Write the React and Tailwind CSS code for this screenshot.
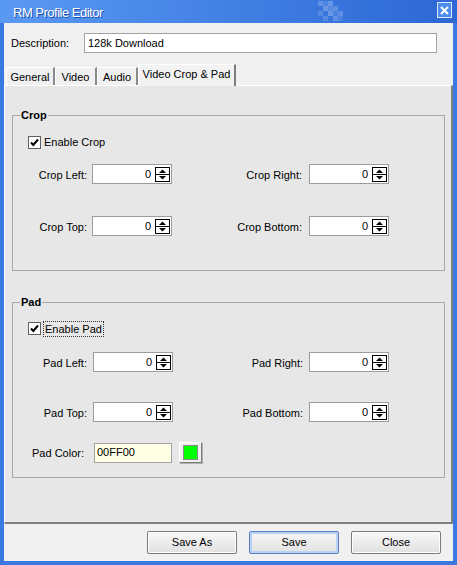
import React from "react";

function Spin() {
  return (
    <div className="flex items-center h-[20px] w-[80px] bg-white border border-[#9c9c9c]">
      <span className="flex-1 text-right pr-[4px] leading-[13px]">0</span>
      <svg width="15" height="15" viewBox="0 0 15 15" className="mr-[1px] shrink-0">
        <rect x="0.5" y="0.5" width="14" height="14" fill="#fff" stroke="#000" />
        <line x1="1" y1="7.5" x2="14" y2="7.5" stroke="#000" />
        <path d="M7.5 2.5 L11 6 L4 6 Z" fill="#000" />
        <path d="M4 9 L11 9 L7.5 12.5 Z" fill="#000" />
      </svg>
    </div>
  );
}

function Check({ label, focus }) {
  return (
    <div className="flex items-center h-[13px] ml-[15px]">
      <div className="w-[13px] h-[13px] bg-white border border-[#5f5f5f] flex items-center justify-center shrink-0">
        <svg width="11" height="11" viewBox="0 0 11 11">
          <path d="M2 5.5 L4.3 8 L9 2.5" fill="none" stroke="#000" strokeWidth="2" />
        </svg>
      </div>
      {focus ? (
        <span className="ml-[2px] px-[1px] leading-[14px] border border-dotted border-[#333]">{label}</span>
      ) : (
        <span className="ml-[3px] leading-[13px]">{label}</span>
      )}
    </div>
  );
}

function Row({ a, b, mt, g1, g2 }) {
  return (
    <div className={`flex items-center ${mt}`}>
      <div className="w-[74px] text-right leading-[13px] pt-[2px]">{a}</div>
      <div className={g1}>
        <Spin />
      </div>
      <div className="w-[130px] text-right leading-[13px] pt-[2px]">{b}</div>
      <div className={g2}>
        <Spin />
      </div>
    </div>
  );
}

const checker = [
  ["bg-white/20", "bg-white/10", "bg-white/25", "", ""],
  ["", "bg-white/25", "bg-white/15", "bg-white/20", ""],
  ["bg-white/15", "", "bg-white/25", "bg-white/10", "bg-white/20"],
  ["", "bg-white/15", "", "bg-white/20", "bg-white/10"],
];

function Button({ children, primary }) {
  return (
    <div
      className={`w-[90px] h-[23px] flex items-center justify-center rounded-[2px] border bg-gradient-to-b from-[#f7f7f7] to-[#e1e1e1] ${
        primary
          ? "border-[#5b80c4] shadow-[inset_0_0_0_2px_#b9d1f2]"
          : "border-[#7a7a7a] shadow-[inset_0_0_0_1px_#ffffff]"
      }`}
    >
      <span className="leading-[13px]">{children}</span>
    </div>
  );
}

export default function App() {
  return (
    <div className="w-[457px] h-[565px] bg-[#3a79e2] flex flex-col font-['Liberation_Sans',Arial,sans-serif] text-[11px] text-black">
      {/* Title bar */}
      <div className="relative h-[23px] shrink-0 flex items-center justify-between bg-gradient-to-r from-[#5a99f3] to-[#2c67d4]">
        <span className="pl-[13px] pt-[1px] text-white text-[13px] tracking-[-0.5px] leading-[15px] [text-shadow:1px_1px_0_#1f4fa8]">
          RM Profile Editor
        </span>
        <div className="absolute left-[318px] top-[1px] grid grid-cols-5">
          {checker.flat().map((c, i) => (
            <div key={i} className={`w-[5px] h-[5px] ${c}`} />
          ))}
        </div>
        <div className="mr-[5px] mb-[3px] w-[15px] h-[16px] border border-white/80 bg-[#4d8ced] flex items-center justify-center">
          <svg width="9" height="9" viewBox="0 0 9 9">
            <path d="M1 1 L8 8 M8 1 L1 8" stroke="#fff" strokeWidth="2" />
          </svg>
        </div>
      </div>

      {/* Client */}
      <div className="mx-[4px] h-[538px] bg-[#f0f0f0] flex flex-col">
        <div className="flex items-center pt-[10px] pl-[7px]">
          <div className="w-[73px] leading-[13px] pt-[1px]">Description:</div>
          <div className="w-[353px] h-[20px] bg-white border border-[#a3a3a3] flex items-center pl-[3px]">
            <span className="leading-[13px]">128k Download</span>
          </div>
        </div>

        {/* Tabs */}
        <div className="flex items-end mt-[11px] pl-[2px] h-[21px]">
          {[
            ["General", "w-[49px]"],
            ["Video", "w-[42px]"],
            ["Audio", "w-[41px]"],
          ].map(([t, w]) => (
            <div
              key={t}
              className={`${w} h-[18px] flex items-center justify-center bg-[#f0f0f0] border-t border-l border-white border-r-2 border-r-[#8a8a8a]`}
            >
              <span className="leading-[13px] pt-[1px]">{t}</span>
            </div>
          ))}
          <div className="relative z-10 -mb-[1px] w-[98px] h-[22px] flex items-start justify-center pt-[3px] bg-[#f2f2f2] border-t border-l border-white border-r-2 border-r-[#7c7c7c]">
            <span className="leading-[13px]">Video Crop &amp; Pad</span>
          </div>
        </div>

        {/* Panel */}
        <div className="h-[439px] shrink-0 bg-[#e7e7e7] border-t border-l border-white border-r-2 border-b-2 border-r-[#808080] border-b-[#808080] pt-[29px] flex flex-col">
          {/* Crop group */}
          <div className="relative ml-[7px] w-[433px] h-[156px] border border-[#a7a7a7] flex flex-col">
            <span className="absolute left-[7px] -top-[7px] px-[1px] bg-[#e7e7e7] font-bold leading-[13px]">Crop</span>
            <div className="mt-[20px]">
              <Check label="Enable Crop" />
            </div>
            <Row a="Crop Left:" b="Crop Right:" mt="mt-[15px]" g1="ml-[5px]" g2="ml-[7px]" />
            <Row a="Crop Top:" b="Crop Bottom:" mt="mt-[32px]" g1="ml-[5px]" g2="ml-[7px]" />
          </div>

          {/* Pad group */}
          <div className="relative ml-[7px] mt-[31px] w-[433px] h-[176px] border border-[#a7a7a7] flex flex-col">
            <span className="absolute left-[7px] -top-[7px] px-[1px] bg-[#e7e7e7] font-bold leading-[13px]">Pad</span>
            <div className="mt-[19px]">
              <Check label="Enable Pad" focus />
            </div>
            <Row a="Pad Left:" b="Pad Right:" mt="mt-[17px]" g1="ml-[6px]" g2="ml-[6px]" />
            <Row a="Pad Top:" b="Pad Bottom:" mt="mt-[30px]" g1="ml-[6px]" g2="ml-[6px]" />
            <div className="flex items-center mt-[20px]">
              <div className="w-[71px] text-right leading-[13px] pt-[2px]">Pad Color:</div>
              <div className="ml-[10px] w-[78px] h-[20px] bg-[#ffffe6] border border-[#a3a3a3] flex items-center pl-[2px]">
                <span className="leading-[13px]">00FF00</span>
              </div>
              <div className="ml-[7px] w-[23px] h-[21px] bg-[#efefef] border border-t-white border-l-white border-r-[#7a7a7a] border-b-[#7a7a7a] shadow-[1px_1px_0_#b0b0b0] flex items-center justify-center">
                <div className="w-[15px] h-[15px] bg-[#00ff00] border border-[#8a8a8a]" />
              </div>
            </div>
          </div>
        </div>

        {/* Buttons */}
        <div className="flex justify-end gap-[12px] pt-[7px] pr-[12px]">
          <Button>Save As</Button>
          <Button primary>Save</Button>
          <Button>Close</Button>
        </div>
      </div>
    </div>
  );
}
